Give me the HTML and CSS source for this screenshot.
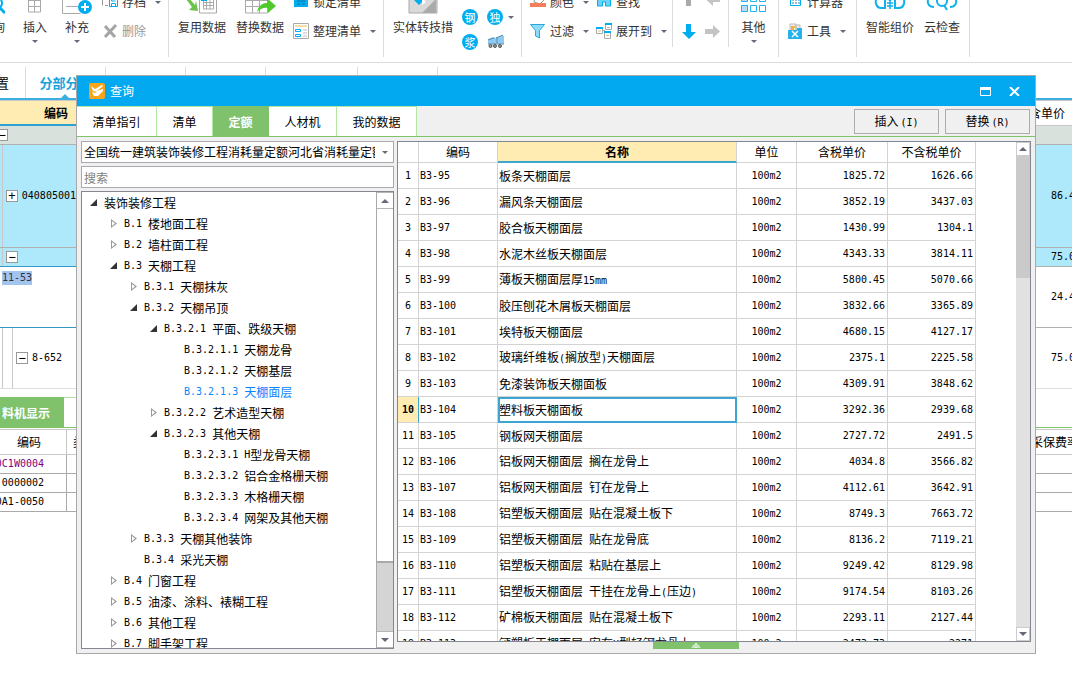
FILE: index.html
```html
<!DOCTYPE html>
<html lang="zh-CN">
<head>
<meta charset="utf-8">
<title>查询</title>
<link rel="stylesheet" href="styles.css">
</head>
<body>
<div class="app">
<header class="ribbon">
  <div class="group">
    <button class="tool tool-cut"><svg width="14" height="14"><g fill="none" stroke="#00aeef" stroke-width="2"><circle cx="5" cy="3" r="6"/><path d="M9 8l5 5" stroke-width="3"/></g></svg><span>询</span></button>
    <button class="tool tool-m"><svg width="28" height="14" fill="#fff" stroke="#aaa"><path d="M7.500-6h12v18h-12zM7.500 .5h12M7.500 6.500h12M13.500-6v18"/></svg><span>插入</span><i class="caret"></i></button>
    <button class="tool tool-m"><svg width="30" height="14"><path d="M.5-4v17.500h18M20-4v4M4 6.500h12" fill="none" stroke="#aaa"/><circle cx="23" cy="7" r="7" fill="#00aeef"/><path d="M19 7h8M23 3v8" stroke="#fff" stroke-width="2"/></svg><span>补充</span><i class="caret"></i></button>
    <div class="stack stack-first">
      <button class="row"><svg width="16" height="16"><path d="M.5 11.500V2h14v4M3 11.500h3" fill="none" stroke="#999"/><path d="M7.500 4.500h8v8h-8zM9.500 12V9.500h4v3M9.500 5v2h4" fill="#fff" stroke="#00aeef"/></svg><span>存档</span><i class="caret"></i></button>
      <button class="row row-off"><svg width="16" height="16"><path d="M3 3l10 11M14 2L3 14" stroke="#a5a5a5" stroke-width="3"/></svg><span>删除</span></button>
    </div>
  </div>
  <div class="group">
    <button class="tool tool-l"><svg width="32" height="14"><path d="M13.500-4v17h17v-17M17.500-2v11h10V-2M17 2.500h10M17 5.500h10M20.500 0v9M24 0v9" fill="none" stroke="#aaa"/><path d="M15-2h6v3h-6z" fill="#00aeef"/><path d="M2-3l7 8 1-4 2 10-9-1 3-3-6-8z" fill="#6cc24a"/></svg><span>复用数据</span></button>
    <button class="tool tool-l"><svg width="32" height="14"><path d="M1.500-4v17h22M1 .5h22M1 6.500h22M8.500-3v16M15.500-3v16M23.500 6v7" fill="none" stroke="#aaa"/><path d="M13 12c2-8 7-9 10-9v-5l9 8-8 7v-5c-4-1-8 1-11 4z" fill="#4fc92b"/></svg><span>替换数据</span></button>
    <div class="stack stack-sort">
      <button class="row"><svg width="16" height="16"><path d="M1 0h14v13H1z" fill="#00aeef"/><path d="M4 4h8M4 7h8M4 10h3M9 10h3" stroke="#0874a8"/></svg><span>锁定清单</span></button>
      <button class="row"><svg width="16" height="16"><path d="M.5 .5h15v15H.5z" fill="#fff" stroke="#aaa"/><path d="M2 3h12" stroke="#f4dfa4" stroke-width="2"/><path d="M2.500 6.500h5v2h-5zM2.500 11.500h5v2h-5z" fill="none" stroke="#00aeef"/><path d="M10 7h4M10 10h4M10 13h4" stroke="#bbb"/></svg><span>整理清单</span><i class="caret"></i></button>
    </div>
  </div>
  <div class="group">
    <button class="tool tool-xl"><svg width="30" height="14"><path d="M1-3h28v16H1z" fill="#d9d9d9" stroke="#aaa"/><path d="M14 13l14-14v14z" fill="#aaa"/><path d="M4-2h14l-7 7z" fill="#00aeef"/><path d="M14-2l4 4-4 3z" fill="#fff"/></svg><span>实体转技措</span></button>
    <div class="badges">
      <button class="dot">钢</button><button class="dot">独</button><i class="caret"></i>
      <button class="dot">浆</button><button class="truck" aria-label="机械"><svg width="18" height="16"><path d="M1 5l5-2 3 1 6-3 2 1v8H1z" fill="#8fcaf0"/><path d="M1 6l6-2M9 4l7-3M10 3v6M1 10h16" stroke="#5b8fb0"/><g fill="#999" stroke="#555"><circle cx="3.500" cy="12" r="1.500"/><circle cx="8" cy="12" r="1.500"/><circle cx="13" cy="12" r="1.500"/></g></svg></button>
    </div>
  </div>
  <div class="group">
    <div class="stack stack-fill">
      <button class="row"><svg width="16" height="16"><path d="M5 2l6 0 3 4-4 4-6-2z" fill="#fff" stroke="#999"/><path d="M0 9h16v4H0z" fill="#f47d5a"/></svg><span>颜色</span><i class="caret"></i></button>
      <button class="row"><svg width="16" height="16"><path d="M.5 1.500h14l-5 6V15l-4-2V7.500z" fill="#8fdcfa" stroke="#2aa7dc"/></svg><span>过滤</span><i class="caret"></i></button>
    </div>
    <div class="stack stack-find">
      <button class="row"><svg width="16" height="16"><path d="M1.500 12V6l2-5h3v4h3V1h3l2 5v6h-5V8h-3v4z" fill="#6bd2f7" stroke="#00aeef"/></svg><span>查找</span></button>
      <button class="row"><svg width="16" height="16"><g fill="#fff"><path d="M.5 4.500h6v6h-6zM8.500 9.500h6v6h-6z" stroke="#aaa"/><path d="M9.500 1.500h6v5h-6z" stroke="#aaa"/></g><path d="M0 5h7M9 1h7M8 9h7" stroke="#00aeef" stroke-width="2"/><path d="M7 7.500h2" stroke="#aaa"/><path d="M2 8h3M11 4.500h3M10 12.500h3" stroke="#d7b98a"/></svg><span>展开到</span><i class="caret"></i></button>
    </div>
    <div class="moves">
      <button aria-label="上移"><svg width="16" height="10"><path d="M5-4h5V6H5z" fill="#aaa"/></svg></button>
      <button aria-label="左移"><svg width="16" height="10"><path d="M15-2v4H8v4L1-.5z" fill="#c4c4c4"/></svg></button>
      <button aria-label="下移"><svg width="16" height="16"><path d="M5 1h5v8h5l-7 7-7-7h4z" fill="#00aeef"/></svg></button>
      <button aria-label="右移"><svg width="16" height="16"><path d="M0 6v5h8v4l7-6.500L8 2v4z" fill="#c4c4c4"/></svg></button>
    </div>
    <button class="tool tool-s"><svg width="26" height="14" fill="#fff" stroke="#1eb4ef"><path d="M.5-5.500h6v7h-6zM.5 5.500h6v6h-6z" fill="#bcdcf2"/><path d="M9.500-5.500h6v7h-6zM18.500-5.500h6v7h-6zM9.500 5.500h6v6h-6zM18.500 5.500h6v6h-6z"/></svg><span>其他</span><i class="caret"></i></button>
  </div>
  <div class="group">
    <div class="stack stack-calc">
      <button class="row"><svg width="16" height="16"><path d="M3.500 0v11.500h10V0z" fill="#fff" stroke="#00aeef"/><path d="M5 6h8M5 9h8" stroke="#337ab7" stroke-dasharray="2 1"/></svg><span>计算器</span></button>
      <button class="row"><svg width="16" height="16"><path d="M3 1h6v7H3zM9 2h4v7H9z" fill="#eee" stroke="#bbb"/><path d="M4 4h4M4 6h3" stroke="#efb540" stroke-width="2"/><path d="M1 7h9V5h5v11H1z" fill="#27b2ec"/><path d="M5 8l6 6M11 8l-6 6" stroke="#fff" stroke-width="1.500"/></svg><span>工具</span><i class="caret"></i></button>
    </div>
  </div>
  <div class="group">
    <button class="tool tool-l"><svg width="32" height="14" fill="none" stroke="#13b0ee" stroke-width="2"><path d="M3-3C0 3 3 8 7 8h4v-9M29-3c3 6 0 11-4 11h-4v-9"/><path d="M13-3l3 4 3-4M16 1v8M13 3h6M13 6h6" stroke-width="1.500"/></svg><span>智能组价</span></button>
    <button class="tool tool-cloud"><svg width="32" height="14" fill="none" stroke="#13b0ee" stroke-width="2"><path d="M3-3C0 3 3 7 8 7M29-3c3 6 0 10-5 10"/><circle cx="16" cy="1" r="5"/><path d="M18 5l3 5"/></svg><span>云检查</span></button>
  </div>
</header>

<nav class="views">
  <a href="#" class="view view-cut">置</a><a href="#" class="view view-on">分部分项</a><div class="view"></div><div class="view"></div><div class="view view-wide"></div><div class="view"></div>
</nav>

<table class="sheet">
  <colgroup><col class="c-code"><col><col class="c-price"></colgroup>
  <thead><tr><th class="hot">编码</th><th></th><th class="edge">含单价</th></tr></thead>
  <tbody>
    <tr class="sum"><td><div class="node node-0"><i class="box">−</i></div></td><td></td><td></td></tr>
    <tr class="item"><td class="guide"><div class="node"><i class="box">+</i>040805001</div></td><td></td><td class="num">86.49</td></tr>
    <tr class="part"><td class="guide"><div class="node"><i class="box">−</i></div></td><td></td><td class="num">75.08</td></tr>
    <tr class="sub sub-on"><td><mark>11-53</mark></td><td></td><td class="num">24.41</td></tr>
    <tr class="sub"><td class="guides"><div class="node node-2"><i class="box">−</i>8-652</div></td><td></td><td class="num">75.08</td></tr>
  </tbody>
</table>

<nav class="panes"><a href="#" class="pane-on">料机显示</a><div class="pane"></div></nav>

<table class="parts">
  <colgroup><col class="p-code"><col><col class="p-fee"></colgroup>
  <thead><tr><th>编码</th><th class="kind">类别</th><th class="edge">采保费率</th></tr></thead>
  <tbody>
    <tr><td class="used"><div>0C1W0004</div></td><td></td><td></td></tr>
    <tr><td><div>0000002</div></td><td></td><td></td></tr>
    <tr><td><div>0A1-0050</div></td><td></td><td></td></tr>
  </tbody>
</table>

<section class="dialog" role="dialog" aria-labelledby="dlg-title">
  <div class="titlebar">
    <svg width="16" height="16"><rect width="16" height="16" rx="2" fill="#f9a51a"/><path d="M2 3l4 3 7-4 1 1-6 5 6-2v2l-5 5H5L3 9l3 1 2-1-4-1z" fill="#fff"/></svg>
    <h1 id="dlg-title">查询</h1>
    <button class="win" aria-label="最大化"><svg width="11" height="9"><path d="M.5 .5h10v8H.5z" fill="none" stroke="#fff"/><path d="M0 0h11v3H0z" fill="#fff"/></svg></button>
    <button class="win" aria-label="关闭"><svg width="11" height="9"><path d="M1 0l9 9M10 0L1 9" stroke="#fff" stroke-width="2"/></svg></button>
  </div>
  <div class="tabs" role="tablist">
    <button role="tab" class="tab tab-4">清单指引</button><button role="tab" class="tab tab-2">清单</button><button role="tab" class="tab tab-2 tab-on" aria-selected="true">定额</button><button role="tab" class="tab tab-3">人材机</button><button role="tab" class="tab tab-4">我的数据</button>
    <div class="actions"><button class="action">插入<span class="la">(I)</span></button><button class="action">替换<span class="la">(R)</span></button></div>
  </div>
  <div class="body">
    <div class="left">
      <div class="combo"><select aria-label="定额库"><option>全国统一建筑装饰装修工程消耗量定额河北省消耗量定额</option></select><i class="caret"></i></div>
      <input class="search" type="text" placeholder="搜索" aria-label="搜索">
      <div class="treebox">
        <ul class="tree">
          <li><i class="open"></i>装饰装修工程</li>
          <li class="l1"><i class="shut"></i><span class="la">B.1 </span>楼地面工程</li>
          <li class="l1"><i class="shut"></i><span class="la">B.2 </span>墙柱面工程</li>
          <li class="l1"><i class="open"></i><span class="la">B.3 </span>天棚工程</li>
          <li class="l2"><i class="shut"></i><span class="la">B.3.1 </span>天棚抹灰</li>
          <li class="l2"><i class="open"></i><span class="la">B.3.2 </span>天棚吊顶</li>
          <li class="l3"><i class="open"></i><span class="la">B.3.2.1 </span>平面、跌级天棚</li>
          <li class="l4"><i></i><span class="la">B.3.2.1.1 </span>天棚龙骨</li>
          <li class="l4"><i></i><span class="la">B.3.2.1.2 </span>天棚基层</li>
          <li class="l4 picked"><i></i><span class="la">B.3.2.1.3 </span>天棚面层</li>
          <li class="l3"><i class="shut"></i><span class="la">B.3.2.2 </span>艺术造型天棚</li>
          <li class="l3"><i class="open"></i><span class="la">B.3.2.3 </span>其他天棚</li>
          <li class="l4"><i></i><span class="la">B.3.2.3.1 H</span>型龙骨天棚</li>
          <li class="l4"><i></i><span class="la">B.3.2.3.2 </span>铝合金格栅天棚</li>
          <li class="l4"><i></i><span class="la">B.3.2.3.3 </span>木格栅天棚</li>
          <li class="l4"><i></i><span class="la">B.3.2.3.4 </span>网架及其他天棚</li>
          <li class="l2"><i class="shut"></i><span class="la">B.3.3 </span>天棚其他装饰</li>
          <li class="l2"><i></i><span class="la">B.3.4 </span>采光天棚</li>
          <li class="l1"><i class="shut"></i><span class="la">B.4 </span>门窗工程</li>
          <li class="l1"><i class="shut"></i><span class="la">B.5 </span>油漆、涂料、裱糊工程</li>
          <li class="l1"><i class="shut"></i><span class="la">B.6 </span>其他工程</li>
          <li class="l1"><i class="shut"></i><span class="la">B.7 </span>脚手架工程</li>
        </ul>
        <div class="bar bar-tree"><i class="end up"></i><i class="thumb"></i><i class="end down"></i></div>
      </div>
    </div>
    <div class="right">
      <div class="gridbox">
        <div class="gridview">
        <table class="grid">
          <colgroup><col class="g-no"><col class="g-code"><col class="g-name"><col class="g-unit"><col class="g-tax"><col class="g-net"></colgroup>
          <thead><tr><th></th><th>编码</th><th class="hot">名称</th><th>单位</th><th>含税单价</th><th>不含税单价</th></tr></thead>
          <tbody>
            <tr><td>1</td><td>B3-95</td><td>板条天棚面层</td><td>100m2</td><td>1825.72</td><td>1626.66</td></tr>
            <tr><td>2</td><td>B3-96</td><td>漏风条天棚面层</td><td>100m2</td><td>3852.19</td><td>3437.03</td></tr>
            <tr><td>3</td><td>B3-97</td><td>胶合板天棚面层</td><td>100m2</td><td>1430.99</td><td>1304.1</td></tr>
            <tr><td>4</td><td>B3-98</td><td>水泥木丝板天棚面层</td><td>100m2</td><td>4343.33</td><td>3814.11</td></tr>
            <tr><td>5</td><td>B3-99</td><td>薄板天棚面层厚<span class="la">15mm</span></td><td>100m2</td><td>5800.45</td><td>5070.66</td></tr>
            <tr><td>6</td><td>B3-100</td><td>胶压刨花木屑板天棚面层</td><td>100m2</td><td>3832.66</td><td>3365.89</td></tr>
            <tr><td>7</td><td>B3-101</td><td>埃特板天棚面层</td><td>100m2</td><td>4680.15</td><td>4127.17</td></tr>
            <tr><td>8</td><td>B3-102</td><td>玻璃纤维板<span class="la">(</span>搁放型<span class="la">)</span>天棚面层</td><td>100m2</td><td>2375.1</td><td>2225.58</td></tr>
            <tr><td>9</td><td>B3-103</td><td>免漆装饰板天棚面板</td><td>100m2</td><td>4309.91</td><td>3848.62</td></tr>
            <tr class="current"><td>10</td><td>B3-104</td><td>塑料板天棚面板</td><td>100m2</td><td>3292.36</td><td>2939.68</td></tr>
            <tr><td>11</td><td>B3-105</td><td>钢板网天棚面层</td><td>100m2</td><td>2727.72</td><td>2491.5</td></tr>
            <tr><td>12</td><td>B3-106</td><td>铝板网天棚面层<span class="la"> </span>搁在龙骨上</td><td>100m2</td><td>4034.8</td><td>3566.82</td></tr>
            <tr><td>13</td><td>B3-107</td><td>铝板网天棚面层<span class="la"> </span>钉在龙骨上</td><td>100m2</td><td>4112.61</td><td>3642.91</td></tr>
            <tr><td>14</td><td>B3-108</td><td>铝塑板天棚面层<span class="la"> </span>贴在混凝土板下</td><td>100m2</td><td>8749.3</td><td>7663.72</td></tr>
            <tr><td>15</td><td>B3-109</td><td>铝塑板天棚面层<span class="la"> </span>贴在龙骨底</td><td>100m2</td><td>8136.2</td><td>7119.21</td></tr>
            <tr><td>16</td><td>B3-110</td><td>铝塑板天棚面层<span class="la"> </span>粘贴在基层上</td><td>100m2</td><td>9249.42</td><td>8129.98</td></tr>
            <tr><td>17</td><td>B3-111</td><td>铝塑板天棚面层<span class="la"> </span>干挂在龙骨上<span class="la">(</span>压边<span class="la">)</span></td><td>100m2</td><td>9174.54</td><td>8103.26</td></tr>
            <tr><td>18</td><td>B3-112</td><td>矿棉板天棚面层<span class="la"> </span>贴在混凝土板下</td><td>100m2</td><td>2293.11</td><td>2127.44</td></tr>
            <tr><td>19</td><td>B3-113</td><td>钙塑板天棚面层<span class="la"> </span>安在<span class="la">U</span>型轻钢龙骨上</td><td>100m2</td><td>2473.73</td><td>2271</td></tr>
          </tbody>
        </table>
        </div>
        <div class="bar bar-grid"><i class="end up"></i><i class="thumb"></i><i class="end down"></i></div>
      </div>
      <button class="handle" aria-label="展开"><svg width="10" height="6"><path d="M1 6l4-4 4 4" fill="none" stroke="#cfeac8" stroke-width="2"/><path d="M3 6l2-2 2 2z" fill="#fff"/></svg></button>
    </div>
  </div>
</section>
</div>
</body>
</html>
```
FILE: styles.css
```css
* { box-sizing: border-box; }
body { margin: 0; background: #fff; color: #000; font: 12px/18px "Noto Sans CJK SC", sans-serif; }
button, input, select { font: inherit; color: inherit; margin: 0; padding: 0; border: 0; background: none; border-radius: 0; }
a { color: inherit; text-decoration: none; }
i { font-style: normal; }
svg { display: block; flex: none; }
table { border-collapse: separate; border-spacing: 0; table-layout: fixed; width: 100%; }
th, td { padding: 0; font-weight: normal; white-space: nowrap; overflow: hidden; }
.la { font: 10px/18px "DejaVu Sans Mono", monospace; white-space: pre; }
.app { position: relative; min-height: 100vh; overflow: hidden; }
.caret { flex: none; width: 0; height: 0; border: 3px solid transparent; border-top-color: #666a78; border-bottom: 0; }

/* ribbon */
.ribbon { display: flex; height: 63px; overflow: hidden; border-bottom: 1px solid #dcdcdc; color: #333; white-space: nowrap; }
.group { display: flex; height: 57px; border-right: 1px solid #dcdcdc; }
.group:nth-child(n+2) { padding-left: 4px; }
.group:nth-child(6) { padding-right: 4px; }
.tool { display: flex; flex-direction: column; align-items: center; height: 57px; }
.tool svg { margin-bottom: 4px; }
.tool .caret { margin-top: 4px; }
.tool-cut { width: 14px; align-items: flex-end; padding-right: 9px; }
.tool-m { width: 42px; }
.tool-l { width: 58px; }
.tool-xl { width: 70px; }
.tool-s { width: 49px; }
.tool-cloud { width: 46px; }
.stack { display: flex; flex-direction: column; gap: 11px; margin-top: -7px; }
.stack-first { width: 70px; padding-left: 4px; }
.stack-sort { width: 94px; padding-left: 4px; }
.stack-fill { width: 70px; padding-left: 4px; }
.stack-find { width: 76px; }
.stack-calc { width: 73px; padding-left: 4px; }
.row { display: flex; align-items: center; gap: 4px; height: 18px; }
.row .caret { margin-left: 5px; }
.row-off { color: #999; }
.badges { display: grid; grid-template-columns: 16px 16px 6px; gap: 9px; align-content: start; align-items: center; padding: 9px 6px 0 4px; }
.dot { width: 16px; height: 16px; border-radius: 8px; background: #00aeef; color: #fff; font-size: 11px; line-height: 16px; }
.badges .caret { margin-left: -4px; }
.badges { margin-right: -3px; }
.truck { grid-column: 2; }
.moves { display: grid; grid-template-columns: 16px 16px; column-gap: 8px; row-gap: 13px; align-content: start; height: 47px; padding: 0 7px 0 8px; border: solid #dcdcdc; border-width: 0 1px; }
.moves button { height: 16px; }
.moves button:nth-child(-n+2) { height: 10px; }

/* view tabs */
.views { display: flex; height: 37px; padding-top: 4px; border-bottom: 2px solid #3faddf; font-size: 13px; }
.view { width: 80px; height: 31px; border-right: 1px solid #dcdcdc; line-height: 31px; text-align: center; white-space: nowrap; }
.view-cut { width: 26px; padding-right: 16px; text-align: right; direction: rtl; }
.view-on { position: relative; color: #14a3dc; font-weight: bold; }
.view-on::after { content: ""; position: absolute; left: 35px; bottom: 0; border: 4px solid transparent; border-top: 0; border-bottom-color: #3faddf; }
.view-wide { width: 92px; }

/* main sheet */
.c-code { width: 76px; }
.c-price { width: 43px; }
.sheet th { height: 26px; border-top: 1px solid #c8c8c8; border-bottom: 1px solid #c8c8c8; }
.sheet .hot { padding-left: 44px; border-bottom: 2px solid #2da1d2; }
.hot { background: #ffecb3; font-weight: bold; text-align: left; }
.edge { text-align: left; }
.sheet td { border-bottom: 1px solid #b0b0b0; font: 10px/14px "DejaVu Sans Mono", monospace; }
.sum td { height: 19px; background: #d9e1dd; }
.item td { height: 103px; background-color: #aee8fb; }
.part td { height: 19px; background-color: #aee8fb; }
.sheet .part td:first-child, .sheet .sub-on td:first-child { border-bottom-color: #3399c4; }
.sub td { height: 61px; }
.sheet .sub:last-child td { border-bottom-color: #dedede; }
.sub-on td:first-child { vertical-align: top; padding: 4px 0 0 2px; }
mark { display: inline-block; background: #a3c4ee; color: #333; }
.sheet .num { padding-left: 22px; }
.guide { background-image: linear-gradient(90deg, transparent 2px, #c8c8c8 2px, #c8c8c8 3px, transparent 3px); }
.guides { background-image: linear-gradient(90deg, transparent 2px, #c8c8c8 2px, #c8c8c8 3px, transparent 3px, transparent 12px, #c8c8c8 12px, #c8c8c8 13px, transparent 13px); }
.node { display: flex; align-items: center; gap: 4px; padding-left: 6px; }
.node-0 { margin-left: -10px; }
.node-2 { padding-left: 16px; }
.box { width: 12px; height: 12px; border: 1px solid #999; background: #fff; font: 12px/10px "DejaVu Sans Mono", monospace; text-align: center; }

/* lower pane */
.panes { display: flex; height: 31px; margin-top: 8px; border-bottom: 1px solid #7fc36b; }
.pane-on { display: flex; justify-content: flex-end; width: 64px; padding-right: 14px; background: #7fc26b; color: #fff; font-weight: bold; line-height: 31px; white-space: nowrap; }
.pane { width: 80px; border-top: 1px solid #b3e6a0; }
.parts { margin-top: 1px; }
.p-code { width: 67px; }
.p-fee { width: 41px; }
.parts th { height: 26px; border-top: 1px solid #c8c8c8; border-bottom: 1px solid #c8c8c8; }
.parts td { height: 19px; border-bottom: 1px solid #aaa; font: 10px/18px "DejaVu Sans Mono", monospace; }
.parts th:first-child { padding-right: 8px; border-right: 1px solid #c8c8c8; }
.parts td:first-child { padding-right: 22px; border-right: 1px solid #aaa; }
.parts td div { display: flex; justify-content: flex-end; }
.parts .kind { padding-left: 6px; text-align: left; }
.used { color: #800080; }

/* dialog window */
.dialog { position: absolute; inset: 75px 36px 22px 76px; display: flex; flex-direction: column; border: 1px solid #a9a9a9; background: #f0f0f0; }
.titlebar { display: flex; align-items: center; height: 30px; padding: 0 15px 0 12px; background: #02a9f1; color: #fff; }
.titlebar h1 { margin: 0 auto 0 5px; font-size: 12px; font-weight: normal; }
.win { margin-left: 18px; }
.tabs { display: flex; height: 31px; border-bottom: 1px solid #7fc36b; }
.tab { height: 30px; border-top: 1px solid #b3e6a0; border-right: 1px solid #b3e6a0; background: #fff; }
.tab-2 { width: 56px; }
.tab-3 { width: 68px; }
.tab-4 { width: 80px; }
.tab-on { background: #7fc26b; border-color: #7fc26b; color: #fff; font-weight: bold; }
.actions { display: flex; gap: 6px; margin-left: auto; padding: 3px 5px 0 0; }
.action { width: 85px; height: 25px; border: 1px solid #adadad; }
.action .la { padding-left: 2px; }
.body { display: flex; gap: 3px; flex: 1; min-height: 0; padding: 4px; }
.left { display: flex; flex-direction: column; gap: 3px; width: 313px; flex: none; }
.combo { display: flex; align-items: center; height: 22px; flex: none; padding: 0 5px 0 2px; background: #fff; border: 1px solid #a9a9af; }
.combo select { flex: 1; min-width: 0; height: 20px; margin-right: 7px; appearance: none; outline: 0; }
.search { height: 22px; flex: none; padding: 0 2px; background: #fff; border: 1px solid #a9a9af; outline: 0; }
.search::placeholder { color: #808080; opacity: 1; }
.treebox { display: flex; flex: 1; min-height: 0; border: 1px solid #828790; background: #fff; }
.tree { flex: 1; min-width: 0; margin: 0; padding: 0; list-style: none; overflow: hidden; }
.tree li { display: flex; align-items: center; height: 21px; padding-left: 8px; white-space: nowrap; }
.tree li > i { width: 14px; flex: none; }
.tree .l1 { padding-left: 28px; }
.tree .l2 { padding-left: 48px; }
.tree .l3 { padding-left: 68px; }
.tree .l4 { padding-left: 88px; }
.picked { color: #0a84ff; }
.open::before { content: ""; display: block; width: 7px; height: 7px; background: #333; clip-path: polygon(100% 0, 100% 100%, 0 100%); }
.shut::before { content: ""; display: block; width: 6px; height: 9px; margin-left: 1px; background: #999; clip-path: polygon(0 0, 100% 50%, 0 100%, 0 0, 1px 2px, 1px 7px, 4px 50%, 1px 2px); }
.bar { display: flex; flex-direction: column; flex: none; }
.bar-tree { width: 17px; background: #d4d4d4; border-left: 1px solid #a9a9a9; }
.bar-grid { width: 14px; background: #e1e1e1; }
.end { display: flex; align-items: center; justify-content: center; height: 17px; background: #fff; border: 1px solid #b5b5b5; border-width: 1px 0; }
.bar-grid .end { height: 14px; border-width: 1px; border-color: #ccc; }
.up::before, .down::before { content: ""; border: 4px solid transparent; }
.up::before { border-top: 0; border-bottom-color: #666a78; }
.down::before { border-bottom: 0; border-top-color: #666a78; }
.down { margin-top: auto; }
.bar-tree .thumb { height: 354px; background: #fff; border-bottom: 2px solid #a9a9a9; }
.bar-grid .thumb { height: 122px; background: #cacaca; }
.right { display: flex; flex-direction: column; flex: 1; min-width: 0; }
.gridbox { display: flex; flex: 1; min-height: 0; border: 1px solid #828790; background: #fff; }
.gridview { flex: 1; min-width: 0; overflow: hidden; }
.grid { width: 578px; }
.g-no { width: 21px; }
.g-code { width: 79px; }
.g-name { width: 239px; }
.g-unit { width: 60px; }
.g-tax { width: 91px; }
.g-net { width: 88px; }
.grid th { height: 21px; border: solid #d3d3d3; border-width: 0 1px 1px 0; }
.grid .hot { border-bottom: 2px solid #3ba6d0; text-align: center; }
.grid td { height: 26px; padding: 0 2px 0 1px; border: solid #d3d3d3; border-width: 0 1px 1px 0; font: 10px/18px "DejaVu Sans Mono", monospace; }
.grid td:nth-child(1), .grid td:nth-child(4) { padding: 0; text-align: center; }
.grid td:nth-child(3) { font: 12px/18px "Noto Sans CJK SC", sans-serif; }
.grid td:nth-child(n+5) { text-align: right; }
.grid .current td:first-child { background: #ffecb3; border-right-color: #3ba6d0; font-weight: bold; }
.grid .current td:nth-child(3) { outline: 2px solid #3ba6d0; outline-offset: -2px; }
.handle { display: flex; justify-content: center; width: 86px; height: 7px; margin-left: 256px; background: #7fc26b; }
```
